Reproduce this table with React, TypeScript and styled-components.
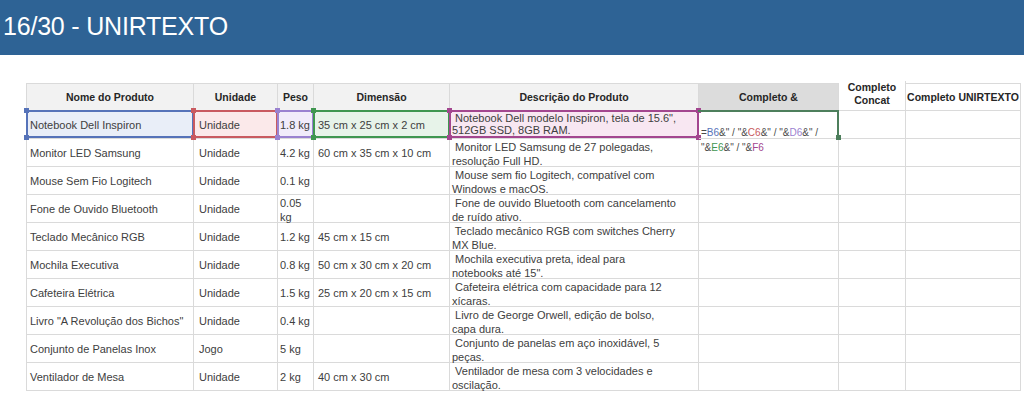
import React, { FC } from 'react';
import styled, { createGlobalStyle, css } from 'styled-components';

const GlobalStyle = createGlobalStyle`
    html, body {
        margin: 0;
        padding: 0;
        background: #ffffff;
    }
    body {
        font-family: 'Liberation Sans', Arial, sans-serif;
        color: #404040;
    }
`;

type Tone = 'blue' | 'red' | 'purple' | 'green' | 'pink';

const tones: Record<Tone, { line: string; fill: string }> = {
    blue: { line: '#5673b9', fill: '#e9eef8' },
    red: { line: '#c95a60', fill: '#fbe9ea' },
    purple: { line: '#9a82d0', fill: '#f1ecfa' },
    green: { line: '#3f9650', fill: '#e7f3e9' },
    pink: { line: '#a3468f', fill: '#f8e7f2' },
};

interface Product {
    name: string;
    unit: string;
    weight: string | string[];
    size: string;
    desc: string[];
}

const products: Product[] = [
    {
        name: 'Notebook Dell Inspiron',
        unit: 'Unidade',
        weight: '1.8 kg',
        size: '35 cm x 25 cm x 2 cm',
        desc: [' Notebook Dell modelo Inspiron, tela de 15.6",', '512GB SSD, 8GB RAM.'],
    },
    {
        name: 'Monitor LED Samsung',
        unit: 'Unidade',
        weight: '4.2 kg',
        size: '60 cm x 35 cm x 10 cm',
        desc: [' Monitor LED Samsung de 27 polegadas,', 'resolução Full HD.'],
    },
    {
        name: 'Mouse Sem Fio Logitech',
        unit: 'Unidade',
        weight: '0.1 kg',
        size: '',
        desc: [' Mouse sem fio Logitech, compatível com', 'Windows e macOS.'],
    },
    {
        name: 'Fone de Ouvido Bluetooth',
        unit: 'Unidade',
        weight: ['0.05', 'kg'],
        size: '',
        desc: [' Fone de ouvido Bluetooth com cancelamento', 'de ruído ativo.'],
    },
    {
        name: 'Teclado Mecânico RGB',
        unit: 'Unidade',
        weight: '1.2 kg',
        size: '45 cm x 15 cm',
        desc: [' Teclado mecânico RGB com switches Cherry', 'MX Blue.'],
    },
    {
        name: 'Mochila Executiva',
        unit: 'Unidade',
        weight: '0.8 kg',
        size: '50 cm x 30 cm x 20 cm',
        desc: [' Mochila executiva preta, ideal para', 'notebooks até 15".'],
    },
    {
        name: 'Cafeteira Elétrica',
        unit: 'Unidade',
        weight: '1.5 kg',
        size: '25 cm x 20 cm x 15 cm',
        desc: [' Cafeteira elétrica com capacidade para 12', 'xícaras.'],
    },
    {
        name: 'Livro "A Revolução dos Bichos"',
        unit: 'Unidade',
        weight: '0.4 kg',
        size: '',
        desc: [' Livro de George Orwell, edição de bolso,', 'capa dura.'],
    },
    {
        name: 'Conjunto de Panelas Inox',
        unit: 'Jogo',
        weight: '5 kg',
        size: '',
        desc: [' Conjunto de panelas em aço inoxidável, 5', 'peças.'],
    },
    {
        name: 'Ventilador de Mesa',
        unit: 'Unidade',
        weight: '2 kg',
        size: '40 cm x 30 cm',
        desc: [' Ventilador de mesa com 3 velocidades e', 'oscilação.'],
    },
];

// formula bar text, one array per wrapped line
const formula: { text: string; tone?: Tone }[][] = [
    [
        { text: '=' },
        { text: 'B6', tone: 'blue' },
        { text: '&" / "&' },
        { text: 'C6', tone: 'red' },
        { text: '&" / "&' },
        { text: 'D6', tone: 'purple' },
        { text: '&" /' },
    ],
    [
        { text: '"&' },
        { text: 'E6', tone: 'green' },
        { text: '&" / "&' },
        { text: 'F6', tone: 'pink' },
    ],
];

const TitleBar = styled.header`
    height: 55px;
    background: #2e6395;
    color: #ffffff;
    display: flex;
    align-items: center;
    padding: 0 0 2px 3px;
    box-sizing: border-box;
    font-size: 25px;
    letter-spacing: -0.2px;
`;

const Sheet = styled.section`
    padding: 28px 0 0 26px;
`;

const Grid = styled.div`
    display: grid;
    grid-template-columns: 167px 84px 36px 136px 249px 140px 67px 115px;
    grid-template-rows: 27px repeat(10, 28px);
    width: max-content;
    border-top: 1px solid #dadada;
    border-left: 1px solid #dadada;
    font-size: 11px;
`;

const cellBase = css`
    position: relative;
    box-sizing: border-box;
    border-right: 1px solid #dadada;
    border-bottom: 1px solid #dadada;
    display: flex;
    white-space: pre;
`;

const HeadCell = styled.div<{ $fill?: string }>`
    ${cellBase};
    align-items: center;
    justify-content: center;
    text-align: center;
    font-weight: bold;
    font-size: 10.5px;
    color: #262626;
    background: ${(p) => p.$fill ?? '#f2f2f2'};
    line-height: 13px;
`;

const WrapHead = styled(HeadCell)`
    align-items: flex-start;
    padding-top: 0;
    margin-top: -3px;
    white-space: normal;
    border-top: 0;
`;

const Cell = styled.div<{ $pad?: number; $tone?: Tone; $top?: boolean; $tight?: boolean }>`
    ${cellBase};
    align-items: ${(p) => (p.$top ? 'flex-start' : 'center')};
    padding-left: ${(p) => p.$pad ?? 3}px;
    padding-top: ${(p) => (p.$top ? 1 : 0)}px;
    line-height: ${(p) => (p.$tight ? 12 : 14)}px;
    ${(p) =>
        p.$tone &&
        css`
            background: ${tones[p.$tone].fill};
            &::after {
                content: '';
                position: absolute;
                inset: -1px -1px 0 -1px;
                border: 2px solid ${tones[p.$tone].line};
                pointer-events: none;
                z-index: 2;
            }
            &::before {
                content: '';
                position: absolute;
                inset: -3px -3px -2px -3px;
                z-index: 3;
                background:
                    linear-gradient(${tones[p.$tone].line}, ${tones[p.$tone].line}) top left / 5px 5px no-repeat,
                    linear-gradient(${tones[p.$tone].line}, ${tones[p.$tone].line}) top right / 5px 5px no-repeat,
                    linear-gradient(${tones[p.$tone].line}, ${tones[p.$tone].line}) bottom left / 5px 5px no-repeat,
                    linear-gradient(${tones[p.$tone].line}, ${tones[p.$tone].line}) bottom right / 5px 5px no-repeat;
            }
        `}
`;

const Lines = styled.div`
    display: flex;
    flex-direction: column;
    position: relative;
    z-index: 4;
`;

const EditCell = styled.div`
    ${cellBase};
    z-index: 5;
`;

const EditFrame = styled.div`
    position: absolute;
    inset: -1px -1px 0 -1px;
    border-top: 2px solid #4d7f5c;
    border-right: 2px solid #4d7f5c;

    &::after {
        content: '';
        position: absolute;
        right: -4px;
        bottom: -2px;
        width: 5px;
        height: 5px;
        background: #4d7f5c;
    }
`;

const Formula = styled.div`
    position: absolute;
    left: 2px;
    top: 14px;
    display: flex;
    flex-direction: column;
    font-size: 10px;
    line-height: 15px;
    color: #4a4a4a;
`;

const FormulaLine = styled.div`
    white-space: pre;
`;

const Ref = styled.span<{ $tone: Tone }>`
    color: ${(p) => tones[p.$tone].line};
`;

const renderLines = (value: string | string[]) =>
    Array.isArray(value) ? (
        <Lines>
            {value.map((line, i) => (
                <span key={i}>{line}</span>
            ))}
        </Lines>
    ) : (
        <Lines>{value}</Lines>
    );

const App: FC = () => {
    return (
        <>
            <GlobalStyle />
            <TitleBar>16/30 - UNIRTEXTO</TitleBar>
            <Sheet>
                <Grid>
                    <HeadCell>Nome do Produto</HeadCell>
                    <HeadCell>Unidade</HeadCell>
                    <HeadCell>Peso</HeadCell>
                    <HeadCell>Dimensão</HeadCell>
                    <HeadCell>Descrição do Produto</HeadCell>
                    <HeadCell $fill="#dcdcdc">Completo &amp;</HeadCell>
                    <WrapHead $fill="#ffffff">Completo Concat</WrapHead>
                    <HeadCell $fill="#ffffff">Completo UNIRTEXTO</HeadCell>

                    {products.map((item, i) => {
                        const first = i === 0;
                        return (
                            <React.Fragment key={item.name}>
                                <Cell $pad={3} $tone={first ? 'blue' : undefined}>
                                    {renderLines(item.name)}
                                </Cell>
                                <Cell $pad={5} $tone={first ? 'red' : undefined}>
                                    {renderLines(item.unit)}
                                </Cell>
                                <Cell $pad={2} $tone={first ? 'purple' : undefined} $top={Array.isArray(item.weight)}>
                                    {renderLines(item.weight)}
                                </Cell>
                                <Cell $pad={4} $tone={first ? 'green' : undefined}>
                                    {renderLines(item.size)}
                                </Cell>
                                <Cell $pad={2} $tone={first ? 'pink' : undefined} $top $tight={first}>
                                    {renderLines(item.desc)}
                                </Cell>
                                {first ? (
                                    <EditCell>
                                        <EditFrame />
                                        <Formula>
                                            {formula.map((line, l) => (
                                                <FormulaLine key={l}>
                                                    {line.map((part, k) =>
                                                        part.tone ? (
                                                            <Ref key={k} $tone={part.tone}>
                                                                {part.text}
                                                            </Ref>
                                                        ) : (
                                                            <span key={k}>{part.text}</span>
                                                        ),
                                                    )}
                                                </FormulaLine>
                                            ))}
                                        </Formula>
                                    </EditCell>
                                ) : (
                                    <Cell />
                                )}
                                <Cell />
                                <Cell />
                            </React.Fragment>
                        );
                    })}
                </Grid>
            </Sheet>
        </>
    );
};

export default App;
